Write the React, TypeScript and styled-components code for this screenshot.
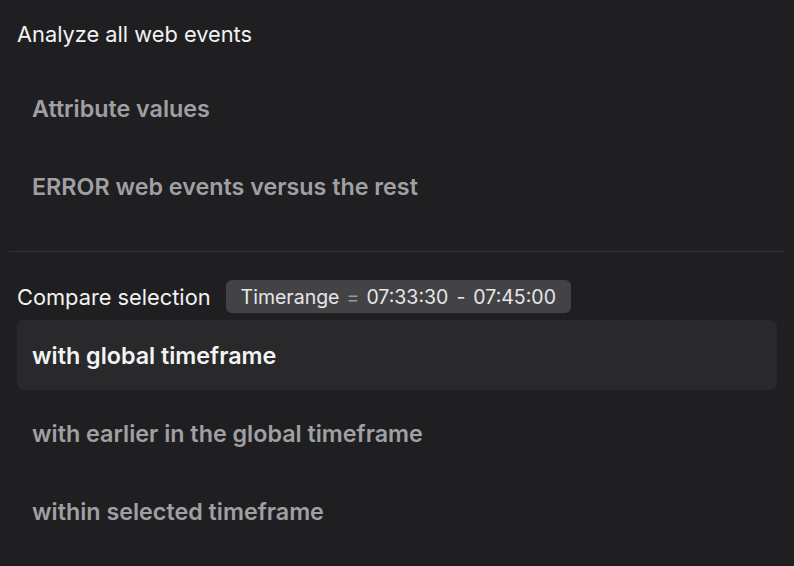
import React from "react";
import styled, { createGlobalStyle } from "styled-components";

const Global = createGlobalStyle`
  html, body { margin: 0; padding: 0; background: #1f1f21; }
  body { font-family: Inter, "Noto Sans", sans-serif; -webkit-font-smoothing: antialiased; }
`;

const Page = styled.div`
  width: 794px;
  height: 566px;
  background: #1f1f21;
  box-sizing: border-box;
  padding: 0 9px;
  overflow: hidden;
`;

const Section = styled.section<{ $top: number }>`
  display: flex;
  flex-direction: column;
  padding: ${(p) => p.$top}px 8px 0;
`;

const Heading = styled.div`
  display: flex;
  align-items: center;
  gap: 15px;
  height: 33px;
  color: #f2f2f3;
  font-size: 21.8px;
  font-weight: 400;
`;

const List = styled.div<{ $top: number }>`
  display: flex;
  flex-direction: column;
  gap: 8px;
  margin-top: ${(p) => p.$top}px;
`;

const Option = styled.div<{ $active?: boolean }>`
  height: 70px;
  display: flex;
  align-items: center;
  padding: 0 15px;
  border-radius: 7px;
  font-size: 23.3px;
  font-weight: 600;
  color: ${(p) => (p.$active ? "#f4f4f5" : "#a0a0a4")};
  background: ${(p) => (p.$active ? "#29292c" : "transparent")};
`;

const Divider = styled.hr`
  border: none;
  height: 1px;
  background: #333336;
  margin: 30px 0 0;
`;

const Badge = styled.span`
  display: inline-flex;
  align-items: center;
  height: 33px;
  padding: 0 15px;
  border-radius: 6px;
  background: #434346;
  color: #e6e6e8;
  font-size: 19.5px;
  white-space: pre;
`;

const Eq = styled.span`
  color: #9a9a9e;
  margin: 0 7px;
`;

const Dash = styled.span`
  margin: 0 8px;
`;

export default function App() {
  return (
    <Page>
      <Global />
      <Section $top={17}>
        <Heading>Analyze all web events</Heading>
        <List $top={23}>
          <Option>Attribute values</Option>
          <Option>ERROR web events versus the rest</Option>
        </List>
      </Section>
      <Divider />
      <Section $top={28}>
        <Heading>
          Compare selection
          <Badge>
            Timerange<Eq>=</Eq>07:33:30<Dash>-</Dash>07:45:00
          </Badge>
        </Heading>
        <List $top={7}>
          <Option $active>with global timeframe</Option>
          <Option>with earlier in the global timeframe</Option>
          <Option>within selected timeframe</Option>
        </List>
      </Section>
    </Page>
  );
}
